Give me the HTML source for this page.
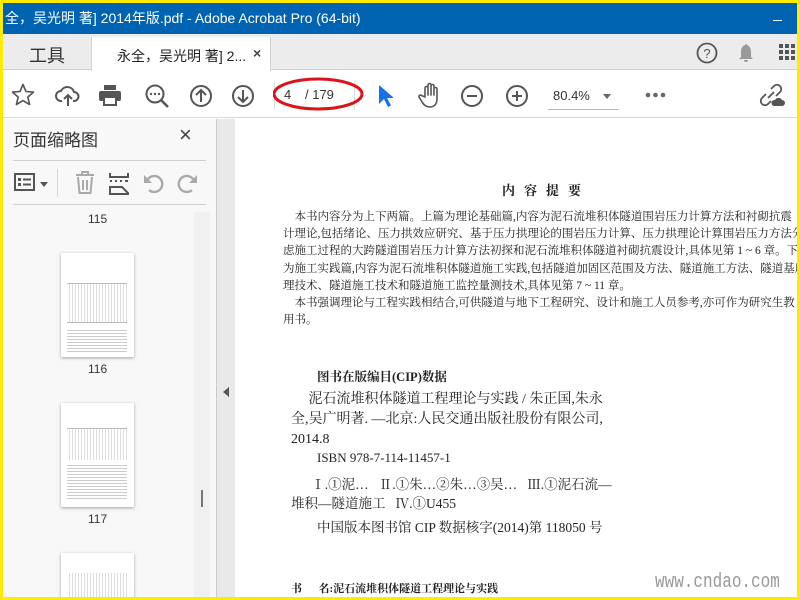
<!DOCTYPE html>
<html><head><meta charset="utf-8"><style>
*{margin:0;padding:0;box-sizing:border-box}
body{width:800px;height:600px;overflow:hidden;background:#ffeb00;position:relative;font-family:"Liberation Sans","Noto Sans CJK SC",sans-serif}
.a{position:absolute}
.ser{font-family:"Liberation Serif","Noto Serif CJK SC",serif;color:#222;white-space:nowrap}
svg{position:absolute}
</style></head><body>
<div class="a" style="left:3px;top:3px;width:794px;height:594px;background:#fff;overflow:hidden">
 <div class="a" style="left:0;top:0;width:794px;height:31px;background:#0063b1;color:#fff;font-size:14px;line-height:31px;padding-left:2px;white-space:nowrap">全，吴光明 著] 2014年版.pdf - Adobe Acrobat Pro (64-bit)</div>
 <div class="a" style="left:770px;top:17px;width:9px;height:1px;background:#fff"></div>
 <div class="a" style="left:0;top:31px;width:794px;height:36px;background:#ececec;border-bottom:1px solid #d0d0d0"></div>
 <div class="a" style="left:26px;top:39px;font-size:18px;color:#333">工具</div>
 <div class="a" style="left:88px;top:34px;width:180px;height:34px;background:#fff;border-left:1px solid #d4d4d4;border-right:1px solid #d4d4d4"></div>
 <div class="a" style="left:114px;top:43px;font-size:14px;color:#222;white-space:nowrap">永全，吴光明 著] 2...</div>
 <div class="a" style="left:250px;top:42px;font-size:14px;color:#444;font-weight:bold">×</div>
 <svg style="left:693px;top:39px" width="22" height="22"><circle cx="11" cy="11" r="9.5" fill="none" stroke="#555" stroke-width="1.8"/><text x="11" y="16" font-size="13" text-anchor="middle" fill="#555" font-family="Liberation Sans">?</text></svg>
 <svg style="left:734px;top:39px" width="18" height="22"><path d="M9 2a2 2 0 0 1 1 1c3 1 4 4 4 7v5l2 2H2l2-2v-5c0-3 1-6 4-7a2 2 0 0 1 1-1z M7 18h4a2 2 0 0 1-4 0z" fill="#999"/></svg>
 <svg style="left:776px;top:41px" width="18" height="20" fill="#555"><rect x="0" y="0" width="4" height="4"/><rect x="6" y="0" width="4" height="4"/><rect x="12" y="0" width="4" height="4"/><rect x="0" y="6" width="4" height="4"/><rect x="6" y="6" width="4" height="4"/><rect x="12" y="6" width="4" height="4"/><rect x="0" y="12" width="4" height="4"/><rect x="6" y="12" width="4" height="4"/><rect x="12" y="12" width="4" height="4"/></svg>
 <div class="a" style="left:0;top:68px;width:794px;height:47px;background:#fff;border-bottom:1px solid #d8d8d8"></div>
 <svg style="left:8px;top:80px" width="24" height="24"><path d="M12 1.5l3 7 7.5.6-5.7 5 1.8 7.4L12 17.6l-6.6 3.9 1.8-7.4L1.5 9.1 9 8.5z" fill="none" stroke="#555" stroke-width="1.6" stroke-linejoin="round"/></svg>
 <svg style="left:52px;top:81px" width="26" height="24"><path d="M7 17H6a5 5 0 0 1 0-10 7 7 0 0 1 13 1 4.5 4.5 0 0 1 0 9h-1" fill="none" stroke="#555" stroke-width="2"/><path d="M13 22V11m-4 4l4-4 4 4" fill="none" stroke="#555" stroke-width="2"/></svg>
 <svg style="left:95px;top:81px" width="24" height="22"><rect x="6" y="1" width="12" height="5" fill="#555"/><rect x="1" y="7" width="22" height="10" rx="2" fill="#555"/><rect x="6" y="13" width="12" height="8" fill="#fff" stroke="#555" stroke-width="2"/></svg>
 <svg style="left:141px;top:80px" width="26" height="26"><circle cx="11" cy="11" r="8.5" fill="none" stroke="#555" stroke-width="2"/><path d="M17 17l7 7" stroke="#555" stroke-width="2.6"/><circle cx="7" cy="11" r="1.2" fill="#555"/><circle cx="11" cy="11" r="1.2" fill="#555"/><circle cx="15" cy="11" r="1.2" fill="#555"/></svg>
 <svg style="left:186px;top:81px" width="24" height="24"><circle cx="12" cy="12" r="10" fill="none" stroke="#555" stroke-width="2"/><path d="M12 18V6m-5 5l5-5 5 5" fill="none" stroke="#555" stroke-width="2"/></svg>
 <svg style="left:228px;top:81px" width="24" height="24"><circle cx="12" cy="12" r="10" fill="none" stroke="#555" stroke-width="2"/><path d="M12 6v12m-5-5l5 5 5-5" fill="none" stroke="#555" stroke-width="2"/></svg>
 <div class="a" style="left:271px;top:78px;width:81px;height:28px;border-left:1px solid #ddd;border-right:1px solid #ddd"></div>
 <div class="a" style="left:281px;top:84px;font-size:13px;color:#333">4</div>
 <div class="a" style="left:302px;top:84px;font-size:13px;color:#333">/ 179</div>
 <svg style="left:270px;top:73px" width="96" height="38"><ellipse cx="45" cy="18" rx="44" ry="15" fill="none" stroke="#d9141b" stroke-width="3"/></svg>
 <svg style="left:374px;top:81px" width="16" height="24"><path d="M2 1v19l5-5 4 8 3-1.5-4-7.5h7z" fill="#1473e6"/></svg>
 <svg style="left:415px;top:79px" width="24" height="28"><path d="M7 15V6a1.5 1.5 0 0 1 3 0v7V3a1.5 1.5 0 0 1 3 0v10V4a1.5 1.5 0 0 1 3 0v9V7a1.5 1.5 0 0 1 3 0v10c0 5-3 8-7 8s-6-2-8-5l-3-5a1.5 1.5 0 0 1 2.5-1.5z" fill="none" stroke="#555" stroke-width="1.6" stroke-linejoin="round"/></svg>
 <svg style="left:457px;top:81px" width="24" height="24"><circle cx="12" cy="12" r="10" fill="none" stroke="#555" stroke-width="2"/><path d="M7 12h10" stroke="#555" stroke-width="2"/></svg>
 <svg style="left:502px;top:81px" width="24" height="24"><circle cx="12" cy="12" r="10" fill="none" stroke="#555" stroke-width="2"/><path d="M7 12h10M12 7v10" stroke="#555" stroke-width="2"/></svg>
 <div class="a" style="left:550px;top:85px;font-size:13px;color:#333">80.4%</div>
 <div class="a" style="left:600px;top:91px;border-left:4px solid transparent;border-right:4px solid transparent;border-top:5px solid #666"></div>
 <div class="a" style="left:545px;top:106px;width:71px;height:1px;background:#bbb"></div>
 <svg style="left:642px;top:88px" width="26" height="8" fill="#666"><circle cx="3" cy="4" r="2.3"/><circle cx="10.5" cy="4" r="2.3"/><circle cx="18" cy="4" r="2.3"/></svg>
 <svg style="left:756px;top:80px" width="30" height="26"><path d="M12 6l3-3a4 4 0 0 1 6 6l-4 4M12 18l-3 3a4 4 0 0 1-6-6l4-4M9 15l6-6" fill="none" stroke="#555" stroke-width="1.8"/><path d="M15 23a3 3 0 0 1 1-6 4 4 0 0 1 7 0 3 3 0 0 1 0 6z" fill="#555"/></svg>
 <div class="a" style="left:0;top:116px;width:213px;height:478px;background:#f8f8f8"></div>
 <div class="a" style="left:10px;top:123px;font-size:17px;color:#333">页面缩略图</div>
 <div class="a" style="left:176px;top:119px;font-size:22px;color:#444">×</div>
 <div class="a" style="left:10px;top:157px;width:193px;height:1px;background:#d0d0d0"></div>
 <svg style="left:11px;top:170px" width="22" height="20"><rect x="1" y="1" width="19" height="16" fill="none" stroke="#555" stroke-width="2"/><rect x="4" y="5" width="3" height="3" fill="#555"/><rect x="4" y="10" width="3" height="3" fill="#555"/><path d="M9 6.5h8M9 11.5h8" stroke="#555" stroke-width="2"/></svg>
 <div class="a" style="left:37px;top:179px;border-left:4px solid transparent;border-right:4px solid transparent;border-top:5px solid #555"></div>
 <div class="a" style="left:54px;top:166px;width:1px;height:28px;background:#d8d8d8"></div>
 <svg style="left:71px;top:168px" width="22" height="24"><path d="M2 4h18M8 4V1h6v3M4 6l1.5 16h11L18 6M9 9v10M13 9v10" fill="none" stroke="#aaa" stroke-width="2"/></svg>
 <svg style="left:106px;top:168px" width="22" height="24"><path d="M1 2v4h18V2M1 10h2M6 10h2M11 10h2M16 10h3M1 23v-7h12l6 6v1z" fill="none" stroke="#555" stroke-width="2"/></svg>
 <svg style="left:140px;top:169px" width="22" height="22"><path d="M5 7a8 8 0 1 1 1 11" fill="none" stroke="#aaa" stroke-width="2.4"/><path d="M1 3v8h8z" fill="#aaa"/></svg>
 <svg style="left:173px;top:169px" width="22" height="22"><path d="M17 7a8 8 0 1 0-1 11" fill="none" stroke="#aaa" stroke-width="2.4"/><path d="M21 3v8h-8z" fill="#aaa"/></svg>
 <div class="a" style="left:10px;top:201px;width:193px;height:1px;background:#d0d0d0"></div>
 <div class="a" style="left:191px;top:209px;width:16px;height:385px;background:#f0f0f0"></div>
 <div class="a" style="left:198px;top:487px;width:2px;height:17px;background:#777"></div>
 <div class="a" style="left:85px;top:209px;font-size:12px;color:#333">115</div>
 <div class="a" style="left:58px;top:250px;width:73px;height:104px;background:#fff;box-shadow:0 1px 3px rgba(0,0,0,.35)">
  <div class="a" style="left:6px;top:30px;width:60px;height:40px;border-top:1px solid #bbb;border-bottom:1px solid #bbb;background:repeating-linear-gradient(90deg,#fff 0 2px,#ddd 2px 3px)"></div>
  <div class="a" style="left:6px;top:75px;width:60px;height:24px;background:repeating-linear-gradient(#fff 0 2px,#ccc 2px 3px)"></div>
 </div>
 <div class="a" style="left:85px;top:359px;font-size:12px;color:#333">116</div>
 <div class="a" style="left:58px;top:400px;width:73px;height:104px;background:#fff;box-shadow:0 1px 3px rgba(0,0,0,.35)">
  <div class="a" style="left:6px;top:25px;width:60px;height:32px;border-top:1px solid #bbb;background:repeating-linear-gradient(90deg,#fff 0 2px,#ddd 2px 3px)"></div>
  <div class="a" style="left:6px;top:60px;width:60px;height:38px;background:repeating-linear-gradient(#fff 0 2px,#ccc 2px 3px)"></div>
 </div>
 <div class="a" style="left:85px;top:509px;font-size:12px;color:#333">117</div>
 <div class="a" style="left:58px;top:550px;width:73px;height:50px;background:#fff;box-shadow:0 1px 3px rgba(0,0,0,.35)">
  <div class="a" style="left:6px;top:20px;width:60px;height:28px;background:repeating-linear-gradient(90deg,#fff 0 2px,#ddd 2px 3px)"></div>
 </div>
 <div class="a" style="left:213px;top:116px;width:1px;height:478px;background:#ccc"></div>
 <div class="a" style="left:214px;top:116px;width:18px;height:478px;background:#e9e9e9"></div>
 <div class="a" style="left:220px;top:384px;border-top:5px solid transparent;border-bottom:5px solid transparent;border-right:6px solid #555"></div>
 <div class="a ser" style="left:499px;top:177px;font-size:13px;font-weight:bold;letter-spacing:9px">内容提要</div>
 <div class="a ser" style="left:280px;top:206px;font-size:11.5px;line-height:17.2px">
  <div>&nbsp;&nbsp;&nbsp;&nbsp;本书内容分为上下两篇。上篇为理论基础篇,内容为泥石流堆积体隧道围岩压力计算方法和衬砌抗震</div>
  <div>计理论,包括绪论、压力拱效应研究、基于压力拱理论的围岩压力计算、压力拱理论计算围岩压力方法分析、</div>
  <div>虑施工过程的大跨隧道围岩压力计算方法初探和泥石流堆积体隧道衬砌抗震设计,具体见第 1 ~ 6 章。下</div>
  <div>为施工实践篇,内容为泥石流堆积体隧道施工实践,包括隧道加固区范围及方法、隧道施工方法、隧道基底</div>
  <div>理技术、隧道施工技术和隧道施工监控量测技术,具体见第 7 ~ 11 章。</div>
  <div>&nbsp;&nbsp;&nbsp;&nbsp;本书强调理论与工程实践相结合,可供隧道与地下工程研究、设计和施工人员参考,亦可作为研究生教</div>
  <div>用书。</div>
 </div>
 <div class="a ser" style="left:314px;top:364px;font-size:12.5px;font-weight:bold">图书在版编目(CIP)数据</div>
 <div class="a ser" style="left:288px;top:387px;font-size:14px;line-height:20px">
  <div>&nbsp;&nbsp;&nbsp;&nbsp;&nbsp;泥石流堆积体隧道工程理论与实践 / 朱正国,朱永</div>
  <div>全,吴广明著. —北京:人民交通出版社股份有限公司,</div>
  <div>2014.8</div>
 </div>
 <div class="a ser" style="left:314px;top:447px;font-size:13px">ISBN 978-7-114-11457-1</div>
 <div class="a ser" style="left:288px;top:472px;font-size:13.5px;line-height:19px">
  <div>&nbsp;&nbsp;&nbsp;&nbsp;&nbsp;&nbsp;Ⅰ.①泥…&nbsp;&nbsp;&nbsp;Ⅱ.①朱…②朱…③吴…&nbsp;&nbsp;&nbsp;Ⅲ.①泥石流—</div>
  <div>堆积—隧道施工&nbsp;&nbsp;&nbsp;Ⅳ.①U455</div>
 </div>
 <div class="a ser" style="left:314px;top:513px;font-size:13.5px">中国版本图书馆 CIP 数据核字(2014)第 118050 号</div>
 <div class="a ser" style="left:288px;top:577px;font-size:11px;font-weight:bold">书&nbsp;&nbsp;&nbsp;&nbsp;&nbsp;&nbsp;名:泥石流堆积体隧道工程理论与实践</div>
 <div class="a" style="left:652px;top:568px;font-family:'Liberation Mono',monospace;font-size:20px;color:#999;transform:scaleX(.8);transform-origin:left">www.cndao.com</div>
</div>
</body></html>
